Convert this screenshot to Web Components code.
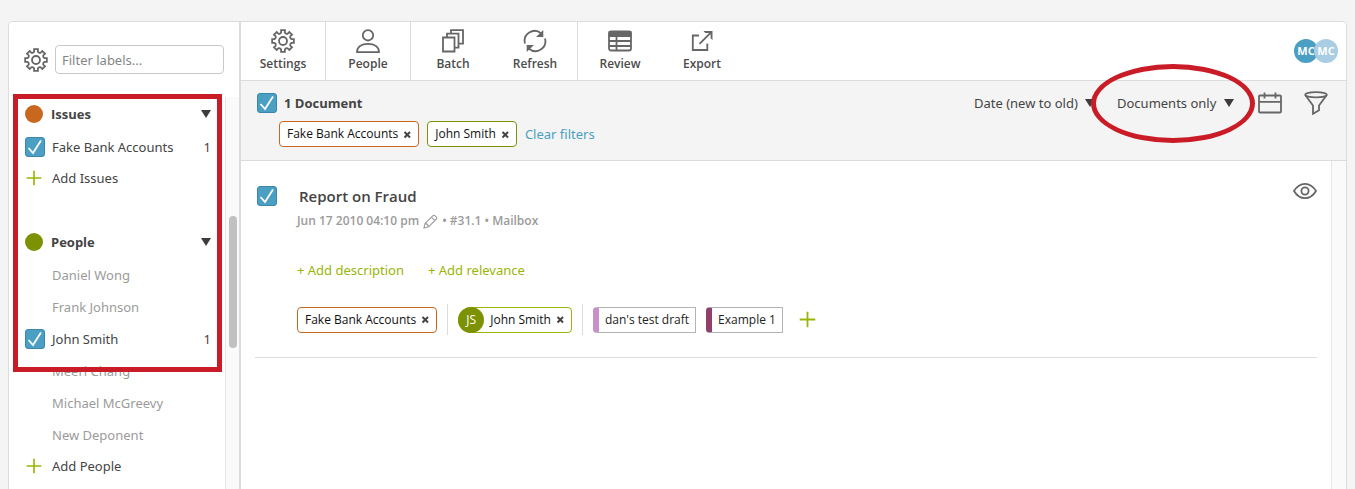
<!DOCTYPE html>
<html lang="en">
<head>
<meta charset="utf-8">
<title>Documents</title>
<style>
    html, body {
        height: 100%;
    }
    body {
        --line: #dcdcdc;
        --panel: #f4f4f4;
        --text: #444;
        --muted: #9b9b9b;
        --blue: #4a9fc2;
        --green: #99b507;
        --olive: #7d9203;
        --orange: #c8681f;
        --mark: #c91c27;
        --strong: "Open Sans", "Noto Sans", sans-serif;
        box-sizing: border-box;
        margin: 0;
        padding: 21px 8px 0;
        overflow: hidden;
        background: var(--panel);
        color: var(--text);
        font: 13px/20px "Noto Sans", "Open Sans", sans-serif;
    }
</style>
</head>
<body>
<review-app></review-app>

<script>
// Outline of a cog with eight teeth and round valleys in a 24 x 24 box
function cogPath() {
    const at = (turn, radius) => {
        const angle = turn * Math.PI / 180;
        return (12 + radius * Math.sin(angle)).toFixed(2) + " " + (12 - radius * Math.cos(angle)).toFixed(2);
    };
    let path = "M" + at(-10, 11);
    for (let i = 0; i < 8; i++) {
        const turn = i * 45;
        path += `L${at(turn + 10, 11)}L${at(turn + 12, 8.8)}A2.200 2.200 0 0 0 ${at(turn + 33, 8.8)}L${at(turn + 35, 11)}`;
    }
    return path + "Z";
}

const ICONS = {
    cog: `<path d="${cogPath()}"/><circle cx="12" cy="12" r="4"/>`,
    person: `<circle cx="12" cy="6.300" r="5.2"/><path d="M1 23.200c0-5.400 4.600-8.400 11-8.400s11 3 11 8.400z"/>`,
    batch: `<path d="M2 8.500h11.500v14H2zM6 8.500V4.700h11.500v14h-4M10 4.700V1.200h12v13.500h-4.500"/>`,
    refresh: `<path d="M2 14.500A10 10 0 0 1 18 4.200M22 9.500A10 10 0 0 1 6 19.800"/><path fill="currentColor" stroke="none" d="M20.300 1v7H13zM3.700 23v-7H11z"/>`,
    table: `<rect x="1" y="2.500" width="22" height="19" rx="2"/><path fill="currentColor" d="M1.500 3h21v4h-21z"/><path d="M8.500 7v14M1 12h22M1 17h22"/>`,
    export: `<path d="M9 6.500H2.800V21H17.300V14.500M9.500 14.800L20.500 3.800"/><path fill="currentColor" stroke="none" d="M13.500 2H22.500v9L20.600 9.200V5.500L19 3.900H15.300z"/>`,
    calendar: `<rect x="1" y="4.500" width="22" height="17" rx="1"/><path d="M1 10.800h22M6.500 1.500v6M17.500 1.500v6"/>`,
    funnel: `<ellipse cx="12" cy="3.800" rx="10.800" ry="2.600"/><path d="M1.200 4l7.800 10.500v8.300l6-3.500v-4.800L22.800 4"/>`,
    eye: `<path d="M1 12c3-5 7-7.200 11-7.200S20 7 23 12c-3 5-7 7.200-11 7.200S4 17 1 12z"/><circle cx="12" cy="12" r="3.600"/>`,
    pencil: `<path d="M1.500 22.500l2-7.500L16 2.500c2-2 7.500 3.500 5.500 5.500L9 20.500zM3.500 15c2.500 .5 5 3 5.500 5.500M13.500 5l5.500 5.500"/>`,
    plus: `<path d="M12 1v22M1 12h22"/>`
};

class AppIcon extends HTMLElement {
    connectedCallback() {
        this.attachShadow({ mode: "open" }).innerHTML = `
            <style>
                :host {
                    display: inline-flex;
                    flex: none;
                    width: 24px;
                    height: 24px;
                }
                svg {
                    width: 100%;
                    height: 100%;
                    fill: none;
                    stroke: currentColor;
                    stroke-width: var(--stroke, 1.8);
                }
            </style>
            <svg viewBox="0 0 24 24" aria-hidden="true">${ICONS[this.getAttribute("name")]}</svg>
        `;
    }
}

// Tick box with its label text in the slot
class TickBox extends HTMLElement {
    connectedCallback() {
        this.attachShadow({ mode: "open" }).innerHTML = `
            <style>
                :host {
                    display: block;
                }
                label {
                    display: flex;
                    align-items: center;
                    gap: var(--tick-gap, 7px);
                }
                input {
                    appearance: none;
                    flex: none;
                    box-sizing: border-box;
                    width: 20px;
                    height: 20px;
                    margin: 0;
                    border: 1px solid #3a86ad;
                    border-radius: 3px;
                    background: #fff;
                }
                input:checked {
                    background: var(--blue) url("data:image/svg+xml,%3Csvg xmlns='http://www.w3.org/2000/svg' viewBox='0 0 18 18'%3E%3Cpath d='M2.500 10l4.500 5L15 2.500' fill='none' stroke='white' stroke-width='1.800'/%3E%3C/svg%3E");
                }
            </style>
            <label><input type="checkbox" checked><slot></slot></label>
        `;
    }
}

class ToolButton extends HTMLElement {
    connectedCallback() {
        this.attachShadow({ mode: "open" }).innerHTML = `
            <style>
                :host {
                    display: block;
                    width: 82px;
                }
                button {
                    display: flex;
                    flex-direction: column;
                    align-items: center;
                    gap: 3px;
                    width: 100%;
                    padding: 7px 0 8px;
                    border: 0;
                    background: none;
                    color: #666;
                    font: 600 12px/16px var(--strong);
                    cursor: pointer;
                }
                span {
                    color: #4c4c4c;
                }
            </style>
            <button type="button">
                <app-icon name="${this.getAttribute("icon")}"></app-icon>
                <span><slot></slot></span>
            </button>
        `;
    }
}

class ToolGroup extends HTMLElement {
    connectedCallback() {
        this.attachShadow({ mode: "open" }).innerHTML = `
            <style>
                :host {
                    display: flex;
                    padding: 0 1px;
                    border-right: 1px solid var(--line);
                }
                :host(:last-of-type) {
                    border-right: 0;
                }
            </style>
            <slot></slot>
        `;
    }
}

// Removable tag; "initials" puts a round badge on its left edge
class TagChip extends HTMLElement {
    connectedCallback() {
        const initials = this.getAttribute("initials");
        this.attachShadow({ mode: "open" }).innerHTML = `
            <style>
                :host {
                    display: inline-flex;
                    align-items: center;
                    box-sizing: border-box;
                    height: 26px;
                    padding: 0 6px 0 7px;
                    border: 1px solid var(--chip, var(--orange));
                    border-radius: 4px;
                    background: #fff;
                    color: #111;
                    font-family: var(--strong);
                    font-size: 12px;
                    white-space: nowrap;
                }
                :host([initials]) {
                    padding-left: 0;
                    border-radius: 13px 4px 4px 13px;
                }
                .badge {
                    width: 26px;
                    margin: 0 6px 0 -1px;
                    border-radius: 13px;
                    background: var(--olive);
                    color: #fff;
                    line-height: 26px;
                    text-align: center;
                }
                button {
                    display: flex;
                    width: 9px;
                    height: 9px;
                    margin: 0 0 0 5px;
                    padding: 0;
                    border: 0;
                    background: none;
                    color: #444;
                    cursor: pointer;
                }
                svg {
                    stroke: currentColor;
                    stroke-width: 2;
                }
            </style>
            ${initials ? `<span class="badge">${initials}</span>` : ""}
            <slot></slot>
            <button type="button" aria-label="Remove"><svg width="9" height="9" viewBox="0 0 9 9"><path d="M1.500 2l5.500 5.500M7 2L1.500 7.500"/></svg></button>
        `;
    }
}

class NoteTag extends HTMLElement {
    connectedCallback() {
        this.attachShadow({ mode: "open" }).innerHTML = `
            <style>
                :host {
                    display: inline-flex;
                    align-items: center;
                    box-sizing: border-box;
                    height: 26px;
                    padding: 0 6px;
                    border: 1px solid #b3b3b3;
                    border-left: 6px solid var(--note);
                    border-radius: 4px 0 0 4px;
                    background: #fff;
                    color: #222;
                    font-family: var(--strong);
                    font-size: 12px;
                    white-space: nowrap;
                }
            </style>
            <slot></slot>
        `;
    }
}

class DropSelect extends HTMLElement {
    connectedCallback() {
        this.attachShadow({ mode: "open" }).innerHTML = `
            <style>
                :host {
                    display: flex;
                    align-items: center;
                    gap: 7px;
                    position: relative;
                }
                select {
                    appearance: none;
                    margin: 0;
                    padding: 0;
                    border: 0;
                    background: none;
                    color: inherit;
                    font: inherit;
                }
                svg {
                    fill: #3c3c3c;
                }
                /* highlight ring drawn over the bar */
                .ring {
                    position: absolute;
                    inset: -29px -21px -30px -26px;
                    border: 5px solid var(--mark);
                    border-radius: 50%;
                    pointer-events: none;
                }
            </style>
            <select aria-label="${this.getAttribute("label")}"><option>${this.getAttribute("value")}</option></select>
            <svg width="10" height="8" viewBox="0 0 10 8"><path d="M0 0h10L5 8z"/></svg>
            ${this.hasAttribute("marked") ? `<div class="ring"></div>` : ""}
        `;
    }
}

class LabelGroup extends HTMLElement {
    connectedCallback() {
        this.attachShadow({ mode: "open" }).innerHTML = `
            <style>
                :host {
                    display: block;
                    margin-bottom: 32px;
                }
                h2 {
                    display: flex;
                    align-items: center;
                    gap: 8px;
                    height: 34px;
                    margin: 0;
                    font: 700 13px/20px var(--strong);
                }
                h2::before {
                    content: "";
                    width: 18px;
                    height: 18px;
                    border-radius: 50%;
                    background: var(--dot);
                }
                h2 svg {
                    margin-left: auto;
                    fill: #3c3c3c;
                }
                .add {
                    display: flex;
                    align-items: center;
                    gap: 10px;
                    height: 30px;
                    padding: 0 1px;
                    border: 0;
                    background: none;
                    color: inherit;
                    font: inherit;
                    cursor: pointer;
                }
                .add app-icon {
                    width: 16px;
                    height: 16px;
                    color: var(--green);
                    --stroke: 2.5;
                }
            </style>
            <h2>${this.getAttribute("name")}<svg width="10" height="8" viewBox="0 0 10 8"><path d="M0 0h10L5 8z"/></svg></h2>
            <slot></slot>
            <button class="add" type="button"><app-icon name="plus"></app-icon>Add ${this.getAttribute("name")}</button>
        `;
    }
}

// One label: ticked with a count, or greyed out without a box
class LabelRow extends HTMLElement {
    connectedCallback() {
        const count = this.getAttribute("count");
        this.attachShadow({ mode: "open" }).innerHTML = `
            <style>
                :host {
                    display: flex;
                    align-items: center;
                    justify-content: space-between;
                    height: 32px;
                }
                button {
                    padding: 0 0 0 27px;
                    border: 0;
                    background: none;
                    color: var(--muted);
                    font: inherit;
                }
            </style>
            ${count ? `<tick-box><slot></slot></tick-box><span>${count}</span>` : `<button type="button"><slot></slot></button>`}
        `;
    }
}

class LabelSidebar extends HTMLElement {
    connectedCallback() {
        this.attachShadow({ mode: "open" }).innerHTML = `
            <style>
                :host {
                    display: flex;
                    flex-direction: column;
                    box-sizing: border-box;
                    border-right: 2px solid var(--line);
                    background: #fff;
                }
                .filter {
                    display: flex;
                    align-items: center;
                    gap: 7px;
                    padding: 23px 15px;
                    color: #666;
                }
                input {
                    flex: 1;
                    min-width: 0;
                    box-sizing: border-box;
                    height: 29px;
                    padding: 0 6px;
                    border: 1px solid #c8c8c8;
                    border-radius: 4px;
                    color: inherit;
                    font: inherit;
                }
                input::placeholder {
                    color: #858585;
                }
                .scroller {
                    flex: 1;
                    min-height: 0;
                    display: flex;
                    position: relative;
                }
                .list {
                    flex: 1;
                    padding: 0 14px 0 16px;
                    overflow: hidden;
                }
                .track {
                    box-sizing: border-box;
                    width: 14px;
                    padding: 119px 2px 0 3px;
                    border-left: 1px solid #e6e6e6;
                    background: #fafafa;
                }
                .thumb {
                    height: 132px;
                    border-radius: 4px;
                    background: #c1c1c1;
                }
                /* highlight frame drawn over the first labels */
                .frame {
                    position: absolute;
                    inset: -3px 17px auto 4px;
                    box-sizing: border-box;
                    height: 278px;
                    border: 5px solid var(--mark);
                    pointer-events: none;
                }
            </style>
            <div class="filter">
                <app-icon name="cog"></app-icon>
                <input type="text" placeholder="Filter labels..." aria-label="Filter labels">
            </div>
            <div class="scroller">
                <div class="list">
                    <label-group name="Issues" style="--dot: var(--orange)">
                        <label-row count="1">Fake Bank Accounts</label-row>
                    </label-group>
                    <label-group name="People" style="--dot: var(--olive)">
                        <label-row>Daniel Wong</label-row>
                        <label-row>Frank Johnson</label-row>
                        <label-row count="1">John Smith</label-row>
                        <label-row>Meeri Chang</label-row>
                        <label-row>Michael McGreevy</label-row>
                        <label-row>New Deponent</label-row>
                    </label-group>
                </div>
                <div class="track"><div class="thumb"></div></div>
                <div class="frame"></div>
            </div>
        `;
    }
}

class AppToolbar extends HTMLElement {
    connectedCallback() {
        this.attachShadow({ mode: "open" }).innerHTML = `
            <style>
                :host {
                    display: flex;
                    border-bottom: 1px solid var(--line);
                    background: #fff;
                }
                .users {
                    display: flex;
                    align-items: center;
                    margin: 0 8px 0 auto;
                }
                .user {
                    width: 24px;
                    border-radius: 50%;
                    background: var(--blue);
                    color: #fff;
                    font: 700 11px/24px var(--strong);
                    text-align: center;
                }
                .away {
                    margin-left: -4px;
                    background: #a9cde3;
                }
            </style>
            <tool-group><tool-button icon="cog">Settings</tool-button></tool-group>
            <tool-group><tool-button icon="person">People</tool-button></tool-group>
            <tool-group>
                <tool-button icon="batch">Batch</tool-button>
                <tool-button icon="refresh">Refresh</tool-button>
            </tool-group>
            <tool-group>
                <tool-button icon="table">Review</tool-button>
                <tool-button icon="export">Export</tool-button>
            </tool-group>
            <div class="users">
                <span class="user">MC</span>
                <span class="user away">MC</span>
            </div>
        `;
    }
}

class FilterBar extends HTMLElement {
    connectedCallback() {
        this.attachShadow({ mode: "open" }).innerHTML = `
            <style>
                :host {
                    display: flex;
                    align-items: flex-start;
                    justify-content: space-between;
                    padding: 10px 18px 13px 16px;
                    border-bottom: 1px solid var(--line);
                    background: var(--panel);
                }
                .chips, .tools {
                    display: flex;
                    align-items: center;
                }
                tick-box {
                    padding: 2px 0 8px;
                    font: 700 13px/20px var(--strong);
                }
                .chips {
                    gap: 8px;
                    margin-left: 22px;
                }
                a {
                    color: var(--blue);
                    text-decoration: none;
                }
                .tools {
                    gap: 22px;
                }
                .tools button {
                    display: flex;
                    padding: 0;
                    border: 0;
                    background: none;
                    color: #666;
                }
                .gap {
                    margin-left: 2px;
                }
            </style>
            <div>
                <tick-box>1 Document</tick-box>
                <div class="chips">
                    <tag-chip>Fake Bank Accounts</tag-chip>
                    <tag-chip style="--chip: var(--olive)">John Smith</tag-chip>
                    <a href="#">Clear filters</a>
                </div>
            </div>
            <div class="tools">
                <drop-select label="Sort order" value="Date (new to old)"></drop-select>
                <drop-select label="Document type" value="Documents only" marked></drop-select>
                <button class="gap" type="button" aria-label="Dates"><app-icon name="calendar"></app-icon></button>
                <button type="button" aria-label="Filters"><app-icon name="funnel"></app-icon></button>
            </div>
        `;
    }
}

class DocumentCard extends HTMLElement {
    connectedCallback() {
        this.attachShadow({ mode: "open" }).innerHTML = `
            <style>
                :host {
                    display: block;
                    padding: 23px 0 22px;
                    border-bottom: 1px solid var(--line);
                }
                .head, .meta, .links, .tags {
                    display: flex;
                    align-items: center;
                }
                .head {
                    justify-content: space-between;
                    padding-left: 2px;
                    height: 24px;
                }
                tick-box {
                    --tick-gap: 22px;
                    font: 600 15px/20px var(--strong);
                }
                button {
                    display: flex;
                    padding: 0;
                    border: 0;
                    background: none;
                    color: #666;
                    font: inherit;
                    cursor: pointer;
                }
                .eye {
                    align-self: flex-start;
                    margin-top: -5px;
                }
                .body {
                    padding-left: 42px;
                }
                .meta {
                    gap: 4px;
                    margin-top: 3px;
                    color: var(--muted);
                    font: 600 12px/20px var(--strong);
                }
                .meta app-icon {
                    width: 15px;
                    height: 15px;
                }
                .meta button {
                    color: inherit;
                }
                .links {
                    gap: 24px;
                    margin: 29px 0 24px;
                }
                .links button, .plus {
                    color: var(--green);
                }
                .tags {
                    gap: 10px;
                }
                .tags hr {
                    width: 1px;
                    height: 31px;
                    margin: 0;
                    border: 0;
                    background: var(--line);
                }
                .plus {
                    margin-left: 6px;
                }
                .plus app-icon {
                    width: 17px;
                    height: 17px;
                    --stroke: 2.5;
                }
            </style>
            <div class="head">
                <tick-box>Report on Fraud</tick-box>
                <button class="eye" type="button" aria-label="Preview"><app-icon name="eye"></app-icon></button>
            </div>
            <div class="body">
                <div class="meta">
                    <span>Jun 17 2010 04:10 pm</span>
                    <button type="button" aria-label="Edit date"><app-icon name="pencil"></app-icon></button>
                    <span>• #31.1 • Mailbox</span>
                </div>
                <div class="links">
                    <button type="button">+ Add description</button>
                    <button type="button">+ Add relevance</button>
                </div>
                <div class="tags">
                    <tag-chip>Fake Bank Accounts</tag-chip>
                    <hr>
                    <tag-chip initials="JS" style="--chip: var(--green)">John Smith</tag-chip>
                    <hr>
                    <note-tag style="--note: #c78fcb">dan's test draft</note-tag>
                    <note-tag style="--note: #91406c">Example 1</note-tag>
                    <button class="plus" type="button" aria-label="Add tag"><app-icon name="plus"></app-icon></button>
                </div>
            </div>
        `;
    }
}

class ReviewApp extends HTMLElement {
    connectedCallback() {
        this.attachShadow({ mode: "open" }).innerHTML = `
            <style>
                :host {
                    display: grid;
                    grid-template-columns: 232px 1fr;
                    box-sizing: border-box;
                    height: 100%;
                    border: 1px solid var(--line);
                    border-bottom: 0;
                    border-radius: 5px 5px 0 0;
                    background: #fff;
                    overflow: hidden;
                }
                main {
                    display: flex;
                    flex-direction: column;
                    min-width: 0;
                }
                .results {
                    flex: 1;
                    display: flex;
                }
                .docs {
                    flex: 1;
                    padding: 0 14px;
                }
                .track {
                    box-sizing: border-box;
                    width: 15px;
                    border-left: 1px solid #e6e6e6;
                    background: #fafafa;
                }
            </style>
            <label-sidebar></label-sidebar>
            <main>
                <app-toolbar></app-toolbar>
                <filter-bar></filter-bar>
                <div class="results">
                    <div class="docs"><document-card></document-card></div>
                    <div class="track"></div>
                </div>
            </main>
        `;
    }
}

customElements.define("app-icon", AppIcon);
customElements.define("tick-box", TickBox);
customElements.define("tool-button", ToolButton);
customElements.define("tool-group", ToolGroup);
customElements.define("tag-chip", TagChip);
customElements.define("note-tag", NoteTag);
customElements.define("drop-select", DropSelect);
customElements.define("label-row", LabelRow);
customElements.define("label-group", LabelGroup);
customElements.define("label-sidebar", LabelSidebar);
customElements.define("app-toolbar", AppToolbar);
customElements.define("filter-bar", FilterBar);
customElements.define("document-card", DocumentCard);
customElements.define("review-app", ReviewApp);
</script>
</body>
</html>
